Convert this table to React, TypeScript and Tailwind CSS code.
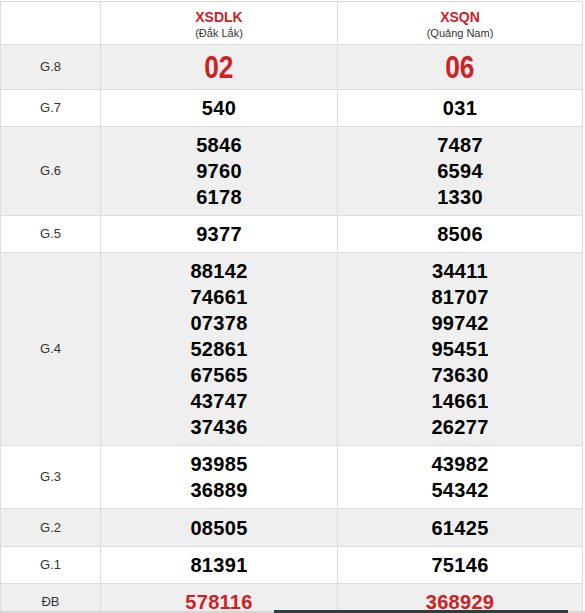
import React from 'react';

type Row = { label: string; a: string[]; b: string[]; kind?: 'g8' | 'db'; h?: string };

const ROWS: Row[] = [
  { label: 'G.8', a: ['02'], b: ['06'], kind: 'g8' },
  { label: 'G.7', a: ['540'], b: ['031'] },
  { label: 'G.6', a: ['5846', '9760', '6178'], b: ['7487', '6594', '1330'] },
  { label: 'G.5', a: ['9377'], b: ['8506'] },
  {
    label: 'G.4',
    a: ['88142', '74661', '07378', '52861', '67565', '43747', '37436'],
    b: ['34411', '81707', '99742', '95451', '73630', '14661', '26277'],
  },
  { label: 'G.3', a: ['93985', '36889'], b: ['43982', '54342'] },
  { label: 'G.2', a: ['08505'], b: ['61425'], h: 'min-h-[38px]' },
  { label: 'G.1', a: ['81391'], b: ['75146'] },
  { label: 'ĐB', a: ['578116'], b: ['368929'], kind: 'db' },
];

const Numbers: React.FC<{ items: string[]; kind?: Row['kind'] }> = ({ items, kind }) => {
  if (kind === 'g8') {
    return (
      <div className="leading-[34px] text-[32px] font-bold text-[#d0201f]">
        <span className="inline-block scale-x-[0.82]">{items[0]}</span>
      </div>
    );
  }
  return (
    <div
      className={
        'flex flex-col items-center text-[20px] font-bold leading-[26px] tracking-[0.3px] ' +
        (kind === 'db' ? 'text-[#d0201f]' : 'text-black')
      }
    >
      {items.map((n) => (
        <span key={n}>{n}</span>
      ))}
    </div>
  );
};

export default function App() {
  return (
    <div className="relative h-[613px] overflow-hidden bg-white font-['Liberation_Sans',Arial,sans-serif]">
      <div className="mt-px w-[583px] border-l border-t border-[#dddddd]">
        <div className="grid grid-cols-[100px_237px_245px] bg-white">
          <div className="border-b border-r border-[#dddddd]" />
          <div className="flex flex-col items-center border-b border-r border-[#dddddd] pt-[6px] pb-[4px] text-center">
            <span className="text-[14px] font-bold leading-[18px] text-[#d0201f]">XSDLK</span>
            <span className="text-[11px] leading-[14px] text-[#333333]">(Đắk Lắk)</span>
          </div>
          <div className="flex flex-col items-center border-b border-r border-[#dddddd] pt-[6px] pb-[4px] text-center">
            <span className="text-[14px] font-bold leading-[18px] text-[#d0201f]">XSQN</span>
            <span className="text-[11px] leading-[14px] text-[#333333]">(Quảng Nam)</span>
          </div>
        </div>
        {ROWS.map((r, i) => (
          <div
            key={r.label}
            className={
              'grid grid-cols-[100px_237px_245px] ' +
              (i % 2 === 0 ? 'bg-[#efefef] ' : 'bg-white ') +
              (r.h ?? '')
            }
          >
            <div className="flex items-center justify-center border-b border-r border-[#dddddd] text-[13px] text-[#333333]">
              {r.label}
            </div>
            <div className="flex items-center justify-center border-b border-r border-[#dddddd] py-[5px]">
              <Numbers items={r.a} kind={r.kind} />
            </div>
            <div className="flex items-center justify-center border-b border-r border-[#dddddd] py-[5px]">
              <Numbers items={r.b} kind={r.kind} />
            </div>
          </div>
        ))}
      </div>
      <div className="absolute bottom-0 left-0 h-[2px] w-full bg-[#d6d6d6]" />
      <div className="absolute bottom-0 left-[274px] h-[3px] w-[294px] bg-[#2f3c42]" />
    </div>
  );
}
